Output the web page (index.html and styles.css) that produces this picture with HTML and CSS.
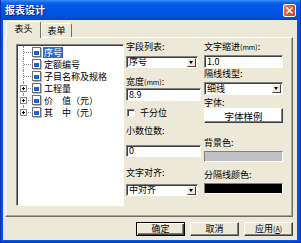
FILE: index.html
```html
<!DOCTYPE html>
<html lang="zh-CN">

<head>
  <meta charset="UTF-8" />
  <title>报表设计</title>
  <link rel="stylesheet" href="styles.css">
</head>

<body>
  <div class="window">
    <!-- Title bar -->
    <div class="titlebar">
      <span class="title">报表设计</span>
      <span class="close">
        <svg width="13" height="13" viewBox="0 0 13 13">
          <path d="M3.5 3.5 L9.5 9.5 M9.5 3.5 L3.5 9.5" stroke="#fff" stroke-width="1.6" />
        </svg>
      </span>
    </div>

    <div class="client">
      <!-- Tabs -->
      <div class="tabs">
        <div class="tab active">表头</div>
        <div class="tab">表单</div>
      </div>

      <div class="panel">
        <!-- Field tree -->
        <div class="tree">
          <div class="node">
            <span class="branch"></span><span class="doc"></span><span class="name selected">序号</span>
          </div>
          <div class="node">
            <span class="branch"></span><span class="doc"></span><span class="name">定额编号</span>
          </div>
          <div class="node">
            <span class="branch"></span><span class="doc"></span><span class="name">子目名称及规格</span>
          </div>
          <div class="node">
            <span class="branch"><span class="plus"></span></span><span class="doc"></span><span class="name">工程量</span>
          </div>
          <div class="node">
            <span class="branch"><span class="plus"></span></span><span class="doc"></span><span class="name">价　值（元）</span>
          </div>
          <div class="node last">
            <span class="branch"><span class="plus"></span></span><span class="doc"></span><span class="name">其　中（元）</span>
          </div>
        </div>

        <!-- Middle column -->
        <div class="col mid">
          <div class="lbl">字段列表:</div>
          <div class="field select field-list">序号<span class="arrow"></span></div>
          <div class="lbl width-lbl">宽度<span class="unit">(mm)</span>:</div>
          <div class="field width-input">8.9</div>
          <div class="check-row"><span class="checkbox"></span>千分位</div>
          <div class="lbl decimals-lbl">小数位数:</div>
          <div class="field decimals-input">0</div>
          <div class="lbl align-lbl">文字对齐:</div>
          <div class="field select align-select">中对齐<span class="arrow"></span></div>
        </div>

        <!-- Right column -->
        <div class="col right">
          <div class="lbl">文字缩进<span class="unit">(mm)</span>:</div>
          <div class="field indent-input">1.0</div>
          <div class="lbl line-lbl">隔线线型:</div>
          <div class="field select line-select">细线<span class="arrow"></span></div>
          <div class="lbl font-lbl">字体:</div>
          <div class="font-sample">字体样例</div>
          <div class="lbl bg-lbl">背景色:</div>
          <div class="swatch gray"></div>
          <div class="lbl sep-lbl">分隔线颜色:</div>
          <div class="swatch black"></div>
        </div>
      </div>

      <!-- Dialog buttons -->
      <div class="actions">
        <div class="btn default">确定</div>
        <div class="btn">取消</div>
        <div class="btn">应用<span class="unit">(<u>A</u>)</span></div>
      </div>
    </div>
  </div>
</body>

</html>
```

FILE: styles.css
```css
* {
  margin: 0;
  padding: 0;
  box-sizing: border-box;
}

body {
  width: 301px;
  height: 243px;
  overflow: hidden;
  font-family: "Noto Sans CJK SC", "Noto Sans", sans-serif;
  font-size: 9px;
  color: #000;
}

/* Window frame */
.window {
  width: 301px;
  height: 243px;
  display: flex;
  flex-direction: column;
  background: #0054e3;
  border-left: 1px solid #0831b8;
  border-right: 1px solid #0831b8;
  border-bottom: 1px solid #0831b8;
}

.titlebar {
  height: 20px;
  flex: none;
  display: flex;
  align-items: center;
  justify-content: space-between;
  padding: 0 4px 0 4px;
  background: linear-gradient(to bottom, #3d8ef7 0, #0a61ec 3px, #0358e6 6px, #0055e3 55%, #0050da 85%, #0048c8 100%);
}

.title {
  color: #fff;
  font-weight: bold;
  font-size: 10px;
  line-height: 12px;
  text-shadow: 1px 1px #0a1f80;
}

.close {
  width: 13px;
  height: 13px;
  display: flex;
  border: 1px solid #fff;
  border-radius: 2px;
  background: linear-gradient(135deg, #f08d6b 0, #e25a31 45%, #c8431c 100%);
}

.close svg {
  margin: -1px;
}

.client {
  flex: 1;
  display: flex;
  flex-direction: column;
  margin: 0 3px 2px 2px;
  padding: 1px 4px 0 2px;
  background: #ece9d8;
}

/* Tabs */
.tabs {
  height: 16px;
  flex: none;
  display: flex;
  align-items: flex-end;
  padding-left: 1px;
}

.tab {
  width: 31px;
  height: 14px;
  display: flex;
  align-items: center;
  justify-content: center;
  line-height: 10px;
  border: 1px solid;
  border-color: #fff #716f64 transparent #fff;
  border-bottom: none;
  border-radius: 2px 2px 0 0;
  background: #ece9d8;
}

.tab.active {
  width: 35px;
  height: 17px;
  margin-bottom: -1px;
  padding-bottom: 2px;
  position: relative;
  z-index: 1;
}

.panel {
  height: 180px;
  flex: none;
  display: flex;
  align-items: flex-start;
  padding: 4px 0 0 10px;
  border: 1px solid;
  border-color: #fff #716f64 #716f64 #fff;
  box-shadow: inset -1px -1px #aca899;
}

/* Tree */
.tree {
  width: 108px;
  height: 162px;
  margin-top: 2px;
  padding: 1px 0 0 1px;
  background: #fff;
  border: 1px solid;
  border-color: #808080 #fff #fff #808080;
  box-shadow: inset 1px 1px #404040;
}

.node {
  height: 12px;
  display: flex;
  align-items: center;
}

.branch {
  width: 13px;
  height: 12px;
  position: relative;
  display: flex;
  align-items: center;
  padding-left: 2px;
}

.branch::before {
  content: "";
  position: absolute;
  left: 5px;
  top: 0;
  bottom: 0;
  border-left: 1px dotted #8c8c8c;
}

.branch::after {
  content: "";
  position: absolute;
  left: 6px;
  top: 6px;
  width: 7px;
  border-top: 1px dotted #8c8c8c;
}

.node.last .branch::before {
  bottom: 6px;
}

.plus {
  width: 7px;
  height: 7px;
  position: relative;
  z-index: 1;
  background:
    linear-gradient(#000, #000) center / 3px 1px no-repeat,
    linear-gradient(#000, #000) center / 1px 3px no-repeat,
    #fff;
  border: 1px solid #8a8a8a;
}

.doc {
  width: 9px;
  height: 10px;
  margin-left: 1px;
  background:
    linear-gradient(#1d5fd8, #1d5fd8) 1px 3px / 5px 4px no-repeat,
    #fff;
  border: 1px solid #6e6e6e;
  box-shadow: 1px 1px #b8b8b8;
}

.name {
  margin-left: 2px;
  padding: 0 1px;
  height: 11px;
  line-height: 11px;
  white-space: nowrap;
}

.name.selected {
  background: #316ac5;
  color: #fff;
}

/* Form columns */
.col {
  display: flex;
  flex-direction: column;
}

.mid {
  width: 75px;
  margin-left: 2px;
}

.right {
  width: 79px;
  margin-left: 3px;
}

.lbl {
  height: 10px;
  line-height: 10px;
  white-space: nowrap;
}

.unit {
  font-size: 7px;
}

.field {
  height: 12px;
  display: flex;
  align-items: center;
  padding-left: 2px;
  line-height: 10px;
  background: #fff;
  border: 1px solid;
  border-color: #808080 #fff #fff #808080;
  box-shadow: inset 1px 1px #404040;
  white-space: nowrap;
}

.select {
  padding-right: 1px;
}

.arrow {
  width: 9px;
  height: 9px;
  margin-left: auto;
  background: #ece9d8;
  border: 1px solid;
  border-color: #fff #404040 #404040 #fff;
  position: relative;
}

.arrow::after {
  content: "";
  position: absolute;
  left: 1px;
  top: 2px;
  border-left: 2.5px solid transparent;
  border-right: 2.5px solid transparent;
  border-top: 3px solid #000;
}

.field-list {
  margin-top: 4px;
  width: 72px;
}

.width-lbl {
  margin-top: 9px;
}

.width-input {
  height: 13px;
  margin-top: 1px;
}

.check-row {
  height: 10px;
  margin-top: 7px;
  display: flex;
  align-items: center;
  line-height: 10px;
}

.checkbox {
  width: 8px;
  height: 8px;
  margin: 0 5px 0 1px;
  background: #fff;
  border: 1px solid;
  border-color: #808080 #fff #fff #808080;
  box-shadow: inset 1px 1px #404040;
}

.decimals-lbl {
  margin-top: 8px;
}

.decimals-input {
  margin-top: 9px;
}

.align-lbl {
  margin-top: 11px;
}

.align-select {
  margin-top: 6px;
  width: 72px;
}

.indent-input {
  height: 13px;
  margin-top: 3px;
}

.line-lbl {
  margin-top: 1px;
}

.line-select {
  height: 13px;
  margin-top: 3px;
}

.font-lbl {
  margin-top: 3px;
}

.font-sample {
  height: 15px;
  display: flex;
  align-items: center;
  justify-content: center;
  font-size: 9.5px;
  background: #fff;
  border: 1px solid;
  border-color: #fff #404040 #404040 #fff;
  box-shadow: inset -1px -1px #808080;
}

.bg-lbl {
  margin-top: 15px;
}

.sep-lbl {
  margin-top: 8px;
}

.swatch {
  height: 11px;
  margin-top: 3px;
  border: 1px solid;
  border-color: #808080 #fff #fff #808080;
}

.swatch.gray {
  background: #c0c0c4;
}

.swatch.black {
  background: #000;
}

/* Dialog buttons */
.actions {
  display: flex;
  justify-content: flex-end;
  gap: 5px;
  margin-top: 5px;
}

.btn {
  width: 49px;
  height: 14px;
  display: flex;
  align-items: center;
  justify-content: center;
  line-height: 10px;
  background: #ece9d8;
  border: 1px solid;
  border-color: #fff #404040 #404040 #fff;
  box-shadow: inset -1px -1px #808080;
}

.btn.default {
  border-color: #000;
  box-shadow: inset 1px 1px #fff, inset -1px -1px #404040, inset -2px -2px #808080;
}
```
